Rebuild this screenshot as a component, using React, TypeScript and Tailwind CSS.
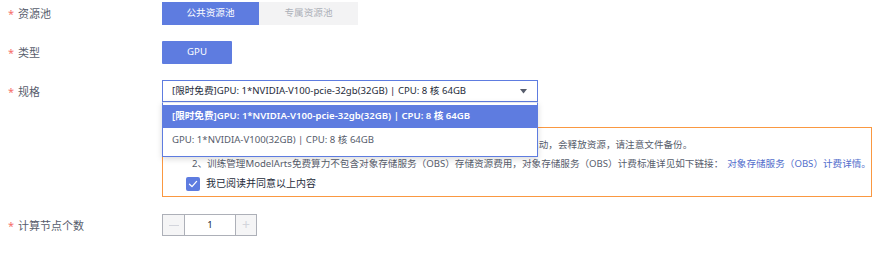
import React from 'react'

const font = 'font-["Noto_Sans","Noto_Sans_CJK_SC",sans-serif]'

function Label({ text }: { text: string }) {
  return (
    <div className="w-[154px] flex items-center text-[11px] text-[#575d6c] leading-none">
      <span className="text-[#f66f6a] w-[10px] text-[11px]">*</span>
      <span>{text}</span>
    </div>
  )
}

function CheckIcon() {
  return (
    <svg width="10" height="10" viewBox="0 0 10 10" fill="none">
      <path d="M1.5 5.2 L4 7.6 L8.6 2.4" stroke="white" strokeWidth="1.3" strokeLinecap="round" strokeLinejoin="round" />
    </svg>
  )
}

export default function App() {
  return (
    <div className={`relative w-[885px] h-[254px] overflow-hidden bg-white ${font}`}>
      <div className="flex flex-col pl-[8px] pt-[2px]">
        {/* 资源池 */}
        <div className="flex h-[23px]">
          <Label text="资源池" />
          <div className="flex text-[9.6px]">
            <div className="w-[97px] bg-[#5e7ce0] text-white flex items-center justify-center">公共资源池</div>
            <div className="w-[99px] bg-[#f3f3f4] text-[#adb0b8] flex items-center justify-center">专属资源池</div>
          </div>
        </div>

        {/* 类型 */}
        <div className="flex h-[23px] mt-[16px]">
          <Label text="类型" />
          <div className="w-[70px] bg-[#5e7ce0] text-white text-[9.6px] flex items-center justify-center rounded-[1px]">GPU</div>
        </div>

        {/* 规格 */}
        <div className="flex h-[22px] mt-[16px]">
          <Label text="规格" />
          <div className="relative w-[376px]">
            <div className="h-full border border-[#5e7ce0] flex items-center pl-[9px] pr-[9px] text-[9.6px] text-[#252b3a]">
              <span className="flex-1">[限时免费]GPU: 1*NVIDIA-V100-pcie-32gb(32GB) | CPU: 8 核 64GB</span>
              <svg width="7" height="5" viewBox="0 0 7 5" className="mr-[1px]">
                <path d="M0 0 H7 L3.5 4.5 Z" fill="#575d6c" />
              </svg>
            </div>
            <div className="absolute left-0 top-[22px] w-full z-10 bg-white border border-[#5e7ce0] border-t-[#e6e8ef] pt-[2px] pb-[3px] shadow-[0_2px_6px_rgba(0,0,0,0.15)] text-[9.6px]">
              <div className="h-[23px] bg-[#5e7ce0] text-white font-semibold flex items-center pl-[9px]">
                [限时免费]GPU: 1*NVIDIA-V100-pcie-32gb(32GB) | CPU: 8 核 64GB
              </div>
              <div className="h-[25px] text-[#575d6c] flex items-center pl-[9px]">
                GPU: 1*NVIDIA-V100(32GB) | CPU: 8 核 64GB
              </div>
            </div>
          </div>
        </div>

        {/* 提示 */}
        <div className="flex mt-[25px]">
          <div className="w-[154px]" />
          <div className="w-[710px] h-[70px] border border-[#fa9841] pl-[23px] pt-[7px] text-[9.6px] text-[#575d6c] leading-[19px]">
            <div className="pl-[6px] whitespace-nowrap">
              1、免费规格仅用于体验，作业运行时长超过1小时后将自动停止，停止后无法再启动，会释放资源，请注意文件备份。
            </div>
            <div className="pl-[6px] whitespace-nowrap">
              2、训练管理ModelArts免费算力不包含对象存储服务（OBS）存储资源费用，对象存储服务（OBS）计费标准详见如下链接：
              <span className="text-[#526ecc] ml-[4px]">对象存储服务（OBS）计费详情。</span>
            </div>
            <div className="flex items-center mt-[1px]">
              <div className="w-[14px] h-[14px] rounded-[2px] bg-[#5e7ce0] flex items-center justify-center">
                <CheckIcon />
              </div>
              <span className="ml-[6px] text-[10px] text-[#252b3a]">我已阅读并同意以上内容</span>
            </div>
          </div>
        </div>

        {/* 计算节点个数 */}
        <div className="flex h-[22px] mt-[17px]">
          <Label text="计算节点个数" />
          <div className="flex w-[95px] border border-[#adb0b8]">
            <div className="w-[22px] bg-[#f5f5f6] border-r border-[#adb0b8] flex items-center justify-center">
              <div className="w-[10px] h-[1px] bg-[#d3d5dc]" />
            </div>
            <div className="flex-1 flex items-center justify-center text-[9.6px] text-[#252b3a]">1</div>
            <div className="w-[21px] bg-[#f5f5f6] border-l border-[#adb0b8] flex items-center justify-center text-[#d3d5dc] text-[14px] leading-none">+</div>
          </div>
        </div>
      </div>
    </div>
  )
}
